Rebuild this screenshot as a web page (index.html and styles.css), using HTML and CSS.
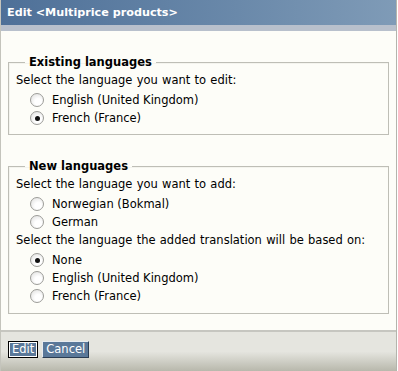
FILE: index.html
```html
<!DOCTYPE html>
<html>
<head>
<meta charset="utf-8">
<link rel="stylesheet" href="styles.css">
</head>
<body>
<div class="dialog">
  <div class="titlebar">Edit &lt;Multiprice products&gt;</div>
  <div class="strip"></div>
  <div class="content">
    <fieldset class="group">
      <legend class="legend">Existing languages</legend>
      <div class="hint">Select the language you want to edit:</div>
      <div class="options">
        <div class="option"><span class="radio"></span><span>English (United Kingdom)</span></div>
        <div class="option"><span class="radio checked"></span><span>French (France)</span></div>
      </div>
    </fieldset>
    <fieldset class="group group-new">
      <legend class="legend">New languages</legend>
      <div class="hint">Select the language you want to add:</div>
      <div class="options">
        <div class="option"><span class="radio"></span><span>Norwegian (Bokmal)</span></div>
        <div class="option"><span class="radio"></span><span>German</span></div>
      </div>
      <div class="hint">Select the language the added translation will be based on:</div>
      <div class="options">
        <div class="option"><span class="radio checked"></span><span>None</span></div>
        <div class="option"><span class="radio"></span><span>English (United Kingdom)</span></div>
        <div class="option"><span class="radio"></span><span>French (France)</span></div>
      </div>
    </fieldset>
  </div>
  <div class="footer">
    <button class="btn btn-focus" type="button">Edit</button>
    <button class="btn" type="button">Cancel</button>
  </div>
</div>
</body>
</html>
```
FILE: styles.css
```css
html, body {
  margin: 0;
  padding: 0;
  background: #ffffff;
}
body {
  font-family: "DejaVu Sans", sans-serif;
  font-size: 11.5px;
  color: #000;
  width: 398px;
  height: 371px;
  overflow: hidden;
}
.dialog {
  width: 395px;
  height: 371px;
  border-left: 1px solid #c4c4bc;
  border-right: 1px solid #b4b4ac;
  display: flex;
  flex-direction: column;
  background: #fdfdf8;
}
.titlebar {
  height: 25px;
  line-height: 26px;
  padding-left: 6px;
  color: #ffffff;
  font-weight: bold;
  font-size: 11.2px;
  background: linear-gradient(to right, #4e7098, #6a89aa 60%, #7f9bb7);
}
.strip {
  height: 6px;
  background: #b8c0cc;
}
.content {
  flex: 1;
  padding: 0 7px 0 7px;
}
.group {
  margin: 22px 0 0 0;
  padding: 0 7px 7px 7px;
  border: 1px solid #bebeb6;
  box-shadow: inset 1px 1px 0 #f4f4ee;
  min-width: 0;
}
.group-new {
  padding-bottom: 8px;
}
.legend {
  font-weight: bold;
  font-size: 11.5px;
  line-height: 18px;
  margin-left: 9px;
  padding: 0 4px;
}
.hint {
  line-height: 18px;
  word-spacing: 0.6px;
}
.options {
  margin-top: 2px;
}
.option {
  display: flex;
  align-items: center;
  gap: 8px;
  height: 18px;
  padding-left: 14px;
}
.radio {
  width: 12px;
  height: 12px;
  border-radius: 50%;
  border: 1px solid #9c9c98;
  background: radial-gradient(circle at 60% 65%, #ffffff 30%, #dcdcda 100%);
  display: flex;
  align-items: center;
  justify-content: center;
  flex: none;
}
.radio.checked::after {
  content: "";
  width: 5px;
  height: 5px;
  border-radius: 50%;
  background: #111;
}
.footer {
  box-sizing: border-box;
  height: 41px;
  border-top: 2px solid #c6c6c0;
  background: linear-gradient(to bottom, #e5e5df 0%, #e5e5df 50%, #b8b8ac 100%);
  display: flex;
  align-items: flex-start;
  gap: 5px;
  padding: 9px 0 0 7px;
}
.btn {
  font-family: "DejaVu Sans", sans-serif;
  font-size: 11.5px;
  color: #ffffff;
  background: #5a7899;
  height: 17px;
  line-height: 13px;
  padding: 0 3px;
  margin: 0;
  border: 1px solid;
  border-color: #e8ecf0 #2a3c52 #2a3c52 #e8ecf0;
}
.btn-focus {
  border: 1px solid #ffffff;
  outline: 1px solid #000000;
  height: 15px;
  margin: 1px 0 0 1px;
  padding: 0 2px;
}
```
